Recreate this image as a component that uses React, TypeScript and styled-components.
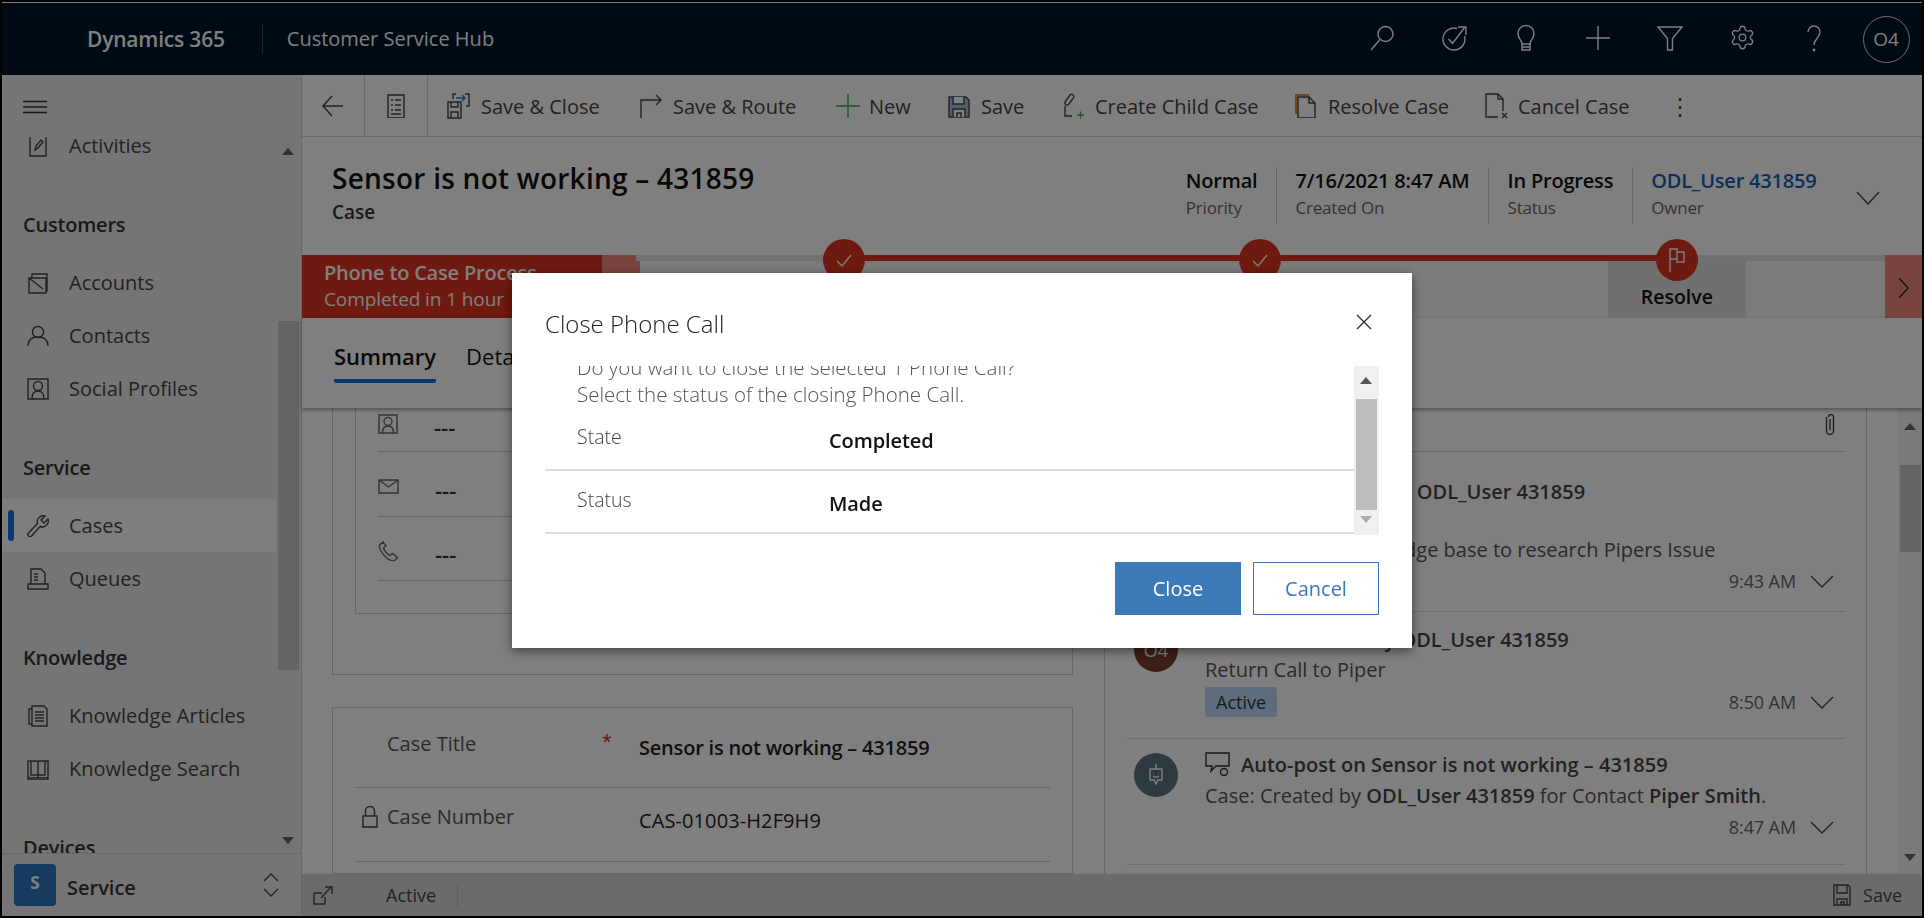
import React from "react";
import styled, { createGlobalStyle } from "styled-components";
import { Settings } from "lucide-react";

const GlobalStyle = createGlobalStyle`
  html, body { margin: 0; padding: 0; background: #000; overflow: hidden; }
  * { box-sizing: border-box; }
  body { font-family: "Open Sans", "Noto Sans", sans-serif; color: #333; }
`;

const Glyph = ({ size = 24, h, children, color }: { size?: number; h?: number; children: React.ReactNode; color?: string }) => (
  <svg
    width={size}
    height={h ?? size}
    viewBox={`0 0 ${size} ${h ?? size}`}
    fill="none"
    stroke={color ?? "currentColor"}
    strokeWidth="1.4"
    style={{ flex: "none", display: "block" }}
  >
    {children}
  </svg>
);

export default function App() {
  return (
    <>
      <GlobalStyle />
      <Frame>
        <TopBar>
          <Brand>Dynamics 365</Brand>
          <HubName>Customer Service Hub</HubName>
          <TopIcons>
            <TopIcon>
              <Glyph size={28}>
                <circle cx="17.5" cy="10" r="7.5" />
                <path d="M12 15.5 3 26" />
              </Glyph>
            </TopIcon>
            <TopIcon>
              <Glyph size={28}>
                <path d="M17 4.500A11 11 0 1 0 24.500 12" />
                <path d="M8.500 15l4 4.500L25 3M18 3h8v8" />
              </Glyph>
            </TopIcon>
            <TopIcon>
              <Glyph size={28}>
                <path d="M10 20c0-4-4-5-4-10.500a8 8 0 0 1 16 0C22 15 18 16 18 20z" />
                <path d="M10 20v6h8v-6M10 23h8" />
              </Glyph>
            </TopIcon>
            <TopIcon>
              <Glyph size={28}>
                <path d="M2 14h24M14 2v24" />
              </Glyph>
            </TopIcon>
            <TopIcon>
              <Glyph size={28}>
                <path d="M2 3h24l-9.500 11.500V26h-5V14.500z" />
              </Glyph>
            </TopIcon>
            <TopIcon>
              <Settings size={27} strokeWidth={1.15} />
            </TopIcon>
            <TopIcon>
              <Glyph size={28}>
                <path d="M8 8a6 6 0 0 1 12 0c0 6-6 7-6 13" />
                <circle cx="14" cy="26" r=".7" />
              </Glyph>
            </TopIcon>
            <TopIcon>
              <UserBadge>O4</UserBadge>
            </TopIcon>
          </TopIcons>
        </TopBar>

        <Body>
          <Sidebar>
            <SideTop>
              <Glyph size={24} h={14}>
                <path d="M0 1.500h24M0 7h24M0 12.500h24" />
              </Glyph>
            </SideTop>
            <SideNav>
              <SideScroll>
                <NavRow>
                  <Glyph size={22}>
                    <path d="M3 1h16v20H3z" />
                    <path d="M8 15l1-4 5-6 2 2-5 6z" />
                  </Glyph>
                  Activities
                </NavRow>
                <NavHead>Customers</NavHead>
                <NavRow>
                  <Glyph size={22}>
                    <path d="M2 6h17v15H2zM2 6l14 11M5 6V2h15v17h-1" />
                  </Glyph>
                  Accounts
                </NavRow>
                <NavRow>
                  <Glyph size={22}>
                    <circle cx="11" cy="7" r="5.500" />
                    <path d="M1 21c0-6 4-9 10-9s10 3 10 9" />
                  </Glyph>
                  Contacts
                </NavRow>
                <NavRow>
                  <Glyph size={22}>
                    <path d="M1 1h20v20H1z" />
                    <circle cx="11" cy="8" r="4.500" />
                    <path d="M5 21c0-6 2-8 6-8s6 2 6 8" />
                  </Glyph>
                  Social Profiles
                </NavRow>
                <NavHead>Service</NavHead>
                <NavRow $active>
                  <NavMarker />
                  <Glyph size={22}>
                    <path d="M21 4l-4 4-3-3 4-4a6 6 0 0 0-7.500 7.500L1.500 18a2 2 0 0 0 3 3L13 11.500A6 6 0 0 0 21 4z" />
                  </Glyph>
                  Cases
                </NavRow>
                <NavRow>
                  <Glyph size={22}>
                    <path d="M4 16V1h10l4 4v11M1 16h20v5H1z" />
                    <path d="M7 6h4M7 9h4M7 12h4" />
                  </Glyph>
                  Queues
                </NavRow>
                <NavHead>Knowledge</NavHead>
                <NavRow>
                  <Glyph size={22}>
                    <path d="M5 4V1h12l3 3v17H5zM5 4H2v15h3" />
                    <path d="M8 7h9M8 10h9M8 13h9M8 16h9" />
                  </Glyph>
                  Knowledge Articles
                </NavRow>
                <NavRow>
                  <Glyph size={22}>
                    <path d="M1 3h9l1 1 1-1h9v17H1zM11 4v16M1 20v2h20v-2M4 3v14h7M18 3v14h-7" />
                  </Glyph>
                  Knowledge Search
                </NavRow>
                <NavHead>Devices</NavHead>
              </SideScroll>
              <SideThumb />
              <ArrowUp $x={280} $y={11} />
              <ArrowDown $x={280} $y={700} />
            </SideNav>
            <AreaSwitch>
              <AreaTile>S</AreaTile>
              <AreaName>Service</AreaName>
              <Glyph size={16} h={26}>
                <path d="M1 9l7-7 7 7M1 17l7 7 7-7" />
              </Glyph>
            </AreaSwitch>
          </Sidebar>

          <Main>
            <Toolbar>
              <ToolSquare>
                <Glyph size={24}>
                  <path d="M22 12H2M11 2 2 12l9 10" />
                </Glyph>
              </ToolSquare>
              <ToolSquare>
                <Glyph size={24}>
                  <path d="M4 1h16v23H4z" />
                  <path d="M7 6h2M11 6h6M7 11h2M11 11h6M7 16h2M11 16h6M7 20h10" />
                </Glyph>
              </ToolSquare>
              <ToolButton $w={211} $lead={18} $gap={9}>
                <Glyph size={26}>
                  <path d="M2 9h13v16H2z" />
                  <path d="M5 9v5h7V9M5 25v-6h7v6" />
                  <path d="M7 6V1h3M19 1h4v12h-3" />
                  <path d="M10 5h9M16 2l3 3-3 3" stroke="#2b78be" />
                </Glyph>
                Save &amp; Close
              </ToolButton>
              <ToolButton $w={196} $gap={8}>
                <Glyph size={26}>
                  <path d="M2 25V7h20M17 2l5 5-5 5" />
                </Glyph>
                Save &amp; Route
              </ToolButton>
              <ToolButton $w={112} $gap={8}>
                <Glyph size={26} color="#3aa757">
                  <path d="M1 13h24M13 1v24" />
                </Glyph>
                New
              </ToolButton>
              <ToolButton $w={112} $gap={10}>
                <Glyph size={24}>
                  <path d="M2 3h17l3 3v17H2z" fill="#9fbcd8" />
                  <path d="M6 3v7h11V3" fill="#fff" />
                  <path d="M6 23v-8h12v8M10 23v-4h4v4" fill="#fff" />
                </Glyph>
                Save
              </ToolButton>
              <ToolButton $w={235} $gap={10}>
                <Glyph size={26}>
                  <path d="M6 9l5-7a2.200 2.200 0 0 1 3.500 2.600L9.500 11.500a2.200 2.200 0 0 1-3.500-2.500z" />
                  <path d="M6 13v10h7" />
                  <path d="M18 22h7M21.500 18.500v7" stroke="#3aa757" />
                </Glyph>
                Create Child Case
              </ToolButton>
              <ToolButton $w={190} $gap={10}>
                <Glyph size={24}>
                  <path d="M2 20V1h13" stroke="#e98a2b" strokeWidth="2" />
                  <path d="M4 3h11l6 6v15H4zM15 3v6h6" fill="#fff" />
                </Glyph>
                Resolve Case
              </ToolButton>
              <ToolButton $w={184} $gap={8}>
                <Glyph size={26}>
                  <path d="M14 24H2V1h12l5 5v12M14 1v5h5" />
                  <path d="M18 20l5 5M23 20l-5 5" />
                </Glyph>
                Cancel Case
              </ToolButton>
              <DotsBtn>⋮</DotsBtn>
            </Toolbar>

            <CaseHeader>
              <div>
                <CaseTitle>Sensor is not working – 431859</CaseTitle>
                <CaseKind>Case</CaseKind>
              </div>
              <HeaderFields>
                <HeadField>
                  <HeadValue>Normal</HeadValue>
                  <HeadLabel>Priority</HeadLabel>
                </HeadField>
                <HeadField $line>
                  <HeadValue>7/16/2021 8:47 AM</HeadValue>
                  <HeadLabel>Created On</HeadLabel>
                </HeadField>
                <HeadField $line>
                  <HeadValue>In Progress</HeadValue>
                  <HeadLabel>Status</HeadLabel>
                </HeadField>
                <HeadField $line>
                  <HeadValue $link>ODL_User 431859</HeadValue>
                  <HeadLabel>Owner</HeadLabel>
                </HeadField>
                <HeadChevron>
                  <Glyph size={24} h={14}>
                    <path d="M1 1l11 12L23 1" />
                  </Glyph>
                </HeadChevron>
              </HeaderFields>
            </CaseHeader>

            <ProcessBar>
              <ProcessCard>
                <ProcessName>Phone to Case Process</ProcessName>
                <ProcessTime>Completed in 1 hour</ProcessTime>
              </ProcessCard>
              <ProcessBack />
              <Stages>
                <Stage $from="50%" $to="0">
                  <StageDot>
                    <Glyph size={18}>
                      <path d="M2 10l5 5L16 4" />
                    </Glyph>
                  </StageDot>
                </Stage>
                <Stage $from="0" $to="0">
                  <StageDot>
                    <Glyph size={18}>
                      <path d="M2 10l5 5L16 4" />
                    </Glyph>
                  </StageDot>
                </Stage>
                <Stage $from="0" $to="50%">
                  <StageDot>
                    <Glyph size={18} h={26}>
                      <path d="M2 25V2h7v3h7v10H9v-3H2M9 5v7" />
                    </Glyph>
                  </StageDot>
                  <StageLabel>Resolve</StageLabel>
                </Stage>
              </Stages>
              <ProcessNext>
                <Glyph size={12} h={22}>
                  <path d="M1 1l9 10-9 10" />
                </Glyph>
              </ProcessNext>
            </ProcessBar>

            <Tabs>
              <Tab $on>Summary</Tab>
              <Tab>Details</Tab>
            </Tabs>

            <Content>
              <LeftCol>
                <Card $tall>
                  <InnerBox>
                    <ContactRow>
                      <Glyph size={20}>
                        <path d="M1 1h18v18H1z" />
                        <circle cx="10" cy="7.500" r="4" />
                        <path d="M4.500 19c0-5 2-7 5.500-7s5.500 2 5.500 7" />
                      </Glyph>
                      <Dashes>---</Dashes>
                    </ContactRow>
                    <ContactRow>
                      <Glyph size={21} h={15}>
                        <path d="M1 1h19v13H1zM1 1l9.500 7L20 1" />
                      </Glyph>
                      <Dashes>---</Dashes>
                    </ContactRow>
                    <ContactRow>
                      <Glyph size={21}>
                        <path d="M5 1 1.500 4c-1 5 8 17 15 15.500l3-3-5-4-2.500 2C9 13 6 9 5.500 7L8 5z" />
                      </Glyph>
                      <Dashes>---</Dashes>
                    </ContactRow>
                  </InnerBox>
                </Card>
                <Card>
                  <FieldRow $h={80} $pt={18}>
                    <FieldName>
                      Case Title<Required>*</Required>
                    </FieldName>
                    <FieldValue $strong>Sensor is not working – 431859</FieldValue>
                  </FieldRow>
                  <FieldRow $h={74} $pt={11}>
                    <LockSlot>
                      <Glyph size={16} h={22}>
                        <path d="M1 10h14v11H1zM3.500 10V5a4.500 4.500 0 0 1 9 0v5" />
                      </Glyph>
                    </LockSlot>
                    <FieldName>Case Number</FieldName>
                    <FieldValue>CAS-01003-H2F9H9</FieldValue>
                  </FieldRow>
                </Card>
              </LeftCol>

              <Timeline>
                <ClipRow>
                  <Glyph size={14} h={22}>
                    <path d="M7 5v11M3.500 3v14a3.500 3.500 0 0 0 7 0V3a2.500 2.500 0 0 0-5 0" />
                  </Glyph>
                </ClipRow>
                <Post $h={160}>
                  <PostBody>
                    <PostTitle $mt={27}>Task was modified by ODL_User 431859</PostTitle>
                    <PostText $mt={32}>Searching the knowledge base to research Pipers Issue</PostText>
                    <PostFoot>
                      <PostTime>9:43 AM</PostTime>
                      <PostChevron />
                    </PostFoot>
                  </PostBody>
                </Post>
                <Post $h={127}>
                  <Avatar $bg="#7d3f2c">O4</Avatar>
                  <PostBody>
                    <PostTitle $mt={15}>Phone Call made by ODL_User 431859</PostTitle>
                    <PostText $mt={4}>Return Call to Piper</PostText>
                    <PostFoot $row>
                      <Tag>Active</Tag>
                      <PostTime>8:50 AM</PostTime>
                      <PostChevron />
                    </PostFoot>
                  </PostBody>
                </Post>
                <Post $h={126}>
                  <Avatar $bg="#5d7481" $top>
                    <Glyph size={24} color="#fff">
                      <path d="M12 1v5M6 6h12v11h-4l-2 4-2-4H6z" />
                      <path d="M9 10h.5M14.500 10h.5M9 13c2 1.500 4 1.500 6 0" />
                    </Glyph>
                  </Avatar>
                  <PostBody>
                    <AutoTitle>
                      <Glyph size={26} h={26}>
                        <path d="M1 1h23v13H11l-5 5 1-5H1z" />
                        <circle cx="19" cy="20" r="3.500" fill="#fff" />
                      </Glyph>
                      <PostTitle $mt={5}>Auto-post on Sensor is not working – 431859</PostTitle>
                    </AutoTitle>
                    <PostText $mt={0}>
                      Case: Created by <b>ODL_User 431859</b> for Contact <b>Piper Smith</b>.
                    </PostText>
                    <PostFoot>
                      <PostTime>8:47 AM</PostTime>
                      <PostChevron />
                    </PostFoot>
                  </PostBody>
                </Post>
              </Timeline>

              <MainScroll>
                <ArrowUp $x={6} $y={15} />
                <MainThumb />
                <ArrowDown $x={6} $y={446} />
              </MainScroll>
            </Content>

            <StatusBar>
              <Glyph size={20}>
                <path d="M1 8v11h11M1 8h8M12 19v-7M8 13 18 2M12 2h7v7" />
              </Glyph>
              <StatusText>Active</StatusText>
              <StatusSave>
                <Glyph size={22}>
                  <path d="M3 1h14l2 2v18H3z" />
                  <path d="M6 1v8h10V1M6 21v-6h10v6M10 21v-3h3v3" />
                </Glyph>
                Save
              </StatusSave>
            </StatusBar>
          </Main>
        </Body>
      </Frame>

      <Overlay>
        <Dialog>
          <DialogHead>
            <DialogTitle>Close Phone Call</DialogTitle>
            <DialogClose>
              <Glyph size={16}>
                <path d="M1 1l14 14M15 1 1 15" />
              </Glyph>
            </DialogClose>
          </DialogHead>
          <DialogScroll>
            <DialogBody>
              <DialogNote>Do you want to close the selected 1 Phone Call?</DialogNote>
              <DialogNote>Select the status of the closing Phone Call.</DialogNote>
              <DialogRow>
                <DialogLabel>State</DialogLabel>
                <DialogValue>Completed</DialogValue>
              </DialogRow>
              <DialogRow>
                <DialogLabel>Status</DialogLabel>
                <DialogValue>Made</DialogValue>
              </DialogRow>
            </DialogBody>
            <DialogBar>
              <ArrowUp $x={6} $y={11} $tone="#555" />
              <DialogThumb />
              <ArrowDown $x={6} $y={150} $tone="#aaa" />
            </DialogBar>
          </DialogScroll>
          <DialogActions>
            <DialogBtn $primary>Close</DialogBtn>
            <DialogBtn>Cancel</DialogBtn>
          </DialogActions>
        </Dialog>
      </Overlay>
    </>
  );
}

const Frame = styled.div`
  width: 1924px;
  height: 918px;
  display: flex;
  flex-direction: column;
  border: 2px solid #000;
  background: #fff;
  overflow: hidden;
`;

const TopBar = styled.header`
  height: 73px;
  flex: none;
  display: flex;
  align-items: center;
  background: #001429;
  border-top: 1px solid #fff;
  color: #fff;
`;

const Brand = styled.div`
  margin-left: 85px;
  padding-right: 37px;
  font-size: 21px;
  font-weight: 600;
  line-height: 30px;
  letter-spacing: -0.2px;
`;

const HubName = styled.div`
  padding-left: 24px;
  border-left: 1px solid #3a4654;
  font-size: 20px;
  line-height: 30px;
`;

const TopIcons = styled.div`
  margin-left: auto;
  display: flex;
  height: 100%;
`;

const TopIcon = styled.div`
  width: 72px;
  display: flex;
  align-items: center;
  justify-content: center;
  padding-bottom: 3px;
`;

const UserBadge = styled.div`
  width: 47px;
  height: 47px;
  border: 1px solid #ddd;
  border-radius: 50%;
  display: flex;
  align-items: center;
  justify-content: center;
  font-size: 19px;
  margin-top: 3px;
`;

const Body = styled.div`
  flex: 1;
  display: flex;
  min-height: 0;
`;

const Sidebar = styled.aside`
  width: 300px;
  flex: none;
  display: flex;
  flex-direction: column;
  background: #eaeaea;
  border-right: 1px solid #d0d0d0;
`;

const SideTop = styled.div`
  height: 62px;
  flex: none;
  padding: 25px 0 0 21px;
`;

const SideNav = styled.nav`
  position: relative;
  flex: 1;
  min-height: 0;
  overflow: hidden;
`;

const SideScroll = styled.div`
  width: 274px;
  margin-top: -18px;
`;

const NavRow = styled.div<{ $active?: boolean }>`
  position: relative;
  height: 53px;
  display: flex;
  align-items: center;
  gap: 20px;
  padding-left: 25px;
  font-size: 20px;
  color: #444;
  background: ${(p) => (p.$active ? "#fdfdfd" : "transparent")};
`;

const NavMarker = styled.span`
  position: absolute;
  left: 6px;
  top: 11px;
  width: 6px;
  height: 31px;
  border-radius: 3px;
  background: #1070e8;
`;

const NavHead = styled.div`
  height: 84px;
  display: flex;
  align-items: flex-end;
  padding: 0 0 19px 21px;
  font-size: 20px;
  line-height: 24px;
  font-weight: 600;
  color: #333;
  letter-spacing: -0.2px;
`;

const SideThumb = styled.div`
  position: absolute;
  left: 276px;
  top: 184px;
  width: 21px;
  height: 349px;
  background: #c8c8c8;
`;

const ArrowUp = styled.i<{ $x: number; $y: number; $tone?: string }>`
  position: absolute;
  left: ${(p) => p.$x}px;
  top: ${(p) => p.$y}px;
  border: 6px solid transparent;
  border-top: 0;
  border-bottom: 7px solid ${(p) => p.$tone ?? "#666"};
`;

const ArrowDown = styled.i<{ $x: number; $y: number; $tone?: string }>`
  position: absolute;
  left: ${(p) => p.$x}px;
  top: ${(p) => p.$y}px;
  border: 6px solid transparent;
  border-bottom: 0;
  border-top: 7px solid ${(p) => p.$tone ?? "#666"};
`;

const AreaSwitch = styled.div`
  height: 63px;
  flex: none;
  display: flex;
  align-items: center;
  padding: 0 22px 0 12px;
  border-top: 1px solid #d0d0d0;
  background: #eaeaea;
  color: #444;
`;

const AreaTile = styled.div`
  width: 42px;
  height: 42px;
  border-radius: 4px;
  background: #2b78be;
  color: #fff;
  display: flex;
  align-items: center;
  justify-content: center;
  font-size: 17px;
  font-weight: 700;
  padding-bottom: 6px;
`;

const AreaName = styled.div`
  flex: 1;
  margin-left: 11px;
  padding-top: 4px;
  font-size: 20px;
  font-weight: 600;
  color: #333;
`;

const Main = styled.main`
  flex: 1;
  min-width: 0;
  display: flex;
  flex-direction: column;
`;

const Toolbar = styled.div`
  height: 62px;
  flex: none;
  display: flex;
  align-items: stretch;
  border-bottom: 1px solid #d0d0d0;
`;

const ToolSquare = styled.div`
  width: 63px;
  display: flex;
  align-items: center;
  justify-content: center;
  border-right: 1px solid #d0d0d0;
  color: #444;
`;

const ToolButton = styled.div<{ $w: number; $gap: number; $lead?: number }>`
  width: ${(p) => p.$w}px;
  flex: none;
  display: flex;
  align-items: center;
  gap: ${(p) => p.$gap}px;
  padding-left: ${(p) => p.$lead ?? 0}px;
  padding-top: 1px;
  font-size: 20px;
  color: #444;
`;

const DotsBtn = styled.div`
  display: flex;
  align-items: center;
  font-size: 24px;
  color: #444;
`;

const CaseHeader = styled.div`
  height: 118px;
  flex: none;
  display: flex;
  justify-content: space-between;
  padding: 20px 0 0 30px;
`;

const CaseTitle = styled.div`
  font-size: 28px;
  line-height: 42px;
  font-weight: 600;
  color: #111;
  letter-spacing: 0.25px;
`;

const CaseKind = styled.div`
  font-size: 19px;
  line-height: 26px;
  font-weight: 600;
  color: #333;
`;

const HeaderFields = styled.div`
  display: flex;
  align-items: flex-start;
  padding-top: 10px;
`;

const HeadField = styled.div<{ $line?: boolean }>`
  height: 57px;
  padding: 0 18.500px;
  border-left: ${(p) => (p.$line ? "1px solid #ccc" : "0")};
`;

const HeadValue = styled.div<{ $link?: boolean }>`
  font-size: 20px;
  line-height: 28px;
  font-weight: 600;
  color: ${(p) => (p.$link ? "#1160b7" : "#111")};
  letter-spacing: -0.2px;
`;

const HeadLabel = styled.div`
  font-size: 17px;
  line-height: 26px;
  color: #666;
  letter-spacing: -0.2px;
`;

const HeadChevron = styled.div`
  width: 87px;
  padding: 24px 0 0 21px;
  color: #444;
`;

const ProcessBar = styled.div`
  height: 63px;
  flex: none;
  display: flex;
  background: #f6f6f6;
`;

const ProcessCard = styled.div`
  width: 300px;
  flex: none;
  padding: 4px 0 0 22px;
  background: #de3420;
  color: #fff;
`;

const ProcessName = styled.div`
  font-size: 20px;
  line-height: 27px;
  font-weight: 600;
  letter-spacing: -0.2px;
`;

const ProcessTime = styled.div`
  font-size: 19px;
  line-height: 26px;
  letter-spacing: -0.1px;
`;

const ProcessBack = styled.div`
  width: 38px;
  flex: none;
  background: #f4887c;
`;

const Stages = styled.div`
  flex: 1;
  min-width: 0;
  display: flex;
  margin-left: -4px;
  border-top: 6px solid #e2e2e2;
`;

const Stage = styled.div<{ $from: string; $to: string }>`
  position: relative;
  flex: 1;
  display: flex;
  justify-content: center;
  &::before {
    content: "";
    position: absolute;
    top: -6px;
    height: 6px;
    left: ${(p) => p.$from};
    right: ${(p) => p.$to};
    background: #de3420;
  }
`;

const StageDot = styled.div`
  position: absolute;
  z-index: 1;
  top: -22px;
  left: calc(50% - 21px);
  width: 42px;
  height: 42px;
  border-radius: 50%;
  background: #de3420;
  color: #fff;
  display: flex;
  align-items: center;
  justify-content: center;
`;

const StageLabel = styled.div`
  width: 138px;
  padding-top: 23px;
  text-align: center;
  background: #e0e0e0;
  font-size: 19.500px;
  font-weight: 600;
  line-height: 26px;
  color: #111;
`;

const ProcessNext = styled.div`
  width: 37px;
  flex: none;
  display: flex;
  align-items: center;
  justify-content: center;
  padding-top: 2px;
  background: #f4887c;
  color: #222;
`;

const Tabs = styled.div`
  position: relative;
  z-index: 1;
  height: 90px;
  flex: none;
  display: flex;
  gap: 30px;
  padding: 0 0 0 32px;
  box-shadow: 0 2px 4px rgba(0, 0, 0, 0.35);
  background: #fff;
`;

const Tab = styled.div<{ $on?: boolean }>`
  height: 65px;
  padding-top: 23px;
  font-size: 22px;
  line-height: 30px;
  font-weight: ${(p) => (p.$on ? 600 : 400)};
  color: #111;
  border-bottom: ${(p) => (p.$on ? "4px solid #1070e8" : "0")};
  border-radius: 0 0 2px 2px;
`;

const Content = styled.div`
  position: relative;
  flex: 1;
  min-height: 0;
  display: flex;
  overflow: hidden;
`;

const LeftCol = styled.div`
  width: 741px;
  flex: none;
  margin-left: 30px;
  display: flex;
  flex-direction: column;
  gap: 32px;
`;

const Card = styled.section<{ $tall?: boolean }>`
  height: ${(p) => (p.$tall ? "267px" : "auto")};
  border: 1px solid #ccc;
  border-top-width: ${(p) => (p.$tall ? 0 : 1)}px;
  padding-left: 22px;
  padding-right: 22px;
  overflow: hidden;
  flex: ${(p) => (p.$tall ? "none" : 1)};
`;

const InnerBox = styled.div`
  height: 206px;
  margin-right: 20px;
  border: 1px solid #ccc;
  border-top: 0;
  padding: 0 0 0 22px;
  overflow: hidden;
`;

const ContactRow = styled.div`
  height: 64.500px;
  display: flex;
  align-items: center;
  gap: 36px;
  padding-top: 6px;
  border-bottom: 1px solid #ccc;
  color: #666;
  &:first-child {
    height: 44px;
    padding-top: 0;
    padding-bottom: 12px;
  }
`;

const Dashes = styled.span`
  width: 40px;
  padding-top: 6px;
  font-size: 22px;
  font-weight: 600;
  color: #333;
`;

const FieldRow = styled.div<{ $h: number; $pt: number }>`
  position: relative;
  height: ${(p) => p.$h}px;
  display: flex;
  padding: ${(p) => p.$pt}px 0 0 32px;
  border-bottom: 1px solid #ccc;
`;

const FieldName = styled.div`
  position: relative;
  width: 252px;
  flex: none;
  font-size: 20px;
  line-height: 36px;
  color: #555;
`;

const Required = styled.span`
  position: absolute;
  left: 215px;
  top: -3px;
  color: #d8261b;
  font-size: 18px;
`;

const LockSlot = styled.div`
  position: absolute;
  left: 7px;
  top: 18px;
  color: #444;
`;

const FieldValue = styled.div<{ $strong?: boolean }>`
  padding-top: 4px;
  font-size: 20px;
  line-height: 36px;
  font-weight: ${(p) => (p.$strong ? 600 : 500)};
  color: #222;
  letter-spacing: ${(p) => (p.$strong ? "-0.2px" : "0.1px")};
`;

const Timeline = styled.div`
  width: 763px;
  flex: none;
  margin-left: 31px;
  border-left: 1px solid #ccc;
  border-right: 1px solid #ccc;
  padding: 0 21px 0 22px;
`;

const ClipRow = styled.div`
  height: 44px;
  display: flex;
  justify-content: flex-end;
  padding: 6px 8px 0 0;
  border-bottom: 1px solid #ccc;
  color: #444;
`;

const Post = styled.article<{ $h: number }>`
  position: relative;
  height: ${(p) => p.$h}px;
  padding-left: 78px;
  display: flex;
  border-bottom: 1px solid #ddd;
`;

const PostBody = styled.div`
  flex: 1;
  min-width: 0;
`;

const PostTitle = styled.div<{ $mt: number }>`
  margin-top: ${(p) => p.$mt}px;
  font-size: 20px;
  line-height: 26px;
  font-weight: 600;
  color: #444;
  white-space: nowrap;
`;

const AutoTitle = styled.div`
  display: flex;
  gap: 10px;
  padding-top: 13px;
  height: 44px;
  ${PostTitle} {
    margin-top: 0;
  }
`;

const PostText = styled.div<{ $mt: number }>`
  margin-top: ${(p) => p.$mt}px;
  font-size: 20px;
  line-height: 26px;
  color: #555;
  white-space: nowrap;
  b {
    font-weight: 600;
    color: #444;
  }
`;

const PostFoot = styled.div<{ $row?: boolean }>`
  position: relative;
  display: flex;
  align-items: center;
  justify-content: flex-end;
  height: 30px;
  padding-right: 11px;
  margin-top: ${(p) => (p.$row ? 4 : 3)}px;
`;

const PostTime = styled.div`
  font-size: 18px;
  color: #666;
  letter-spacing: -0.1px;
`;

const PostChevron = () => (
  <ChevronBox>
    <Glyph size={24} h={13}>
      <path d="M1 1l11 11L23 1" />
    </Glyph>
  </ChevronBox>
);

const ChevronBox = styled.span`
  margin-left: 14px;
  color: #444;
`;

const Tag = styled.span`
  position: absolute;
  left: 0;
  top: 0;
  height: 30px;
  padding: 0 11px;
  display: flex;
  align-items: center;
  border-radius: 2px;
  background: #bcd9fb;
  font-size: 18px;
  color: #333;
`;

const Avatar = styled.div<{ $bg: string; $top?: boolean }>`
  position: absolute;
  left: 7px;
  top: ${(p) => (p.$top ? 14 : 16)}px;
  width: 44px;
  height: 44px;
  border-radius: 50%;
  background: ${(p) => p.$bg};
  color: #fff;
  display: flex;
  align-items: center;
  justify-content: center;
  font-size: 18px;
`;

const MainScroll = styled.div`
  position: relative;
  width: 25px;
  flex: none;
  margin-left: 31px;
  background: #f4f4f4;
`;

const MainThumb = styled.div`
  position: absolute;
  left: 2px;
  top: 57px;
  width: 21px;
  height: 87px;
  background: #c8c8c8;
`;

const StatusBar = styled.footer`
  height: 42px;
  flex: none;
  display: flex;
  align-items: center;
  padding: 0 20px 0 11px;
  background: #d6d6d6;
  color: #444;
`;

const StatusText = styled.div`
  margin-left: 53px;
  padding-right: 21px;
  border-right: 1px solid #bbb;
  font-size: 18px;
  line-height: 24px;
`;

const StatusSave = styled.div`
  margin-left: auto;
  display: flex;
  align-items: center;
  gap: 10px;
  font-size: 18px;
`;

const Overlay = styled.div`
  position: fixed;
  inset: 0;
  z-index: 10;
  display: flex;
  justify-content: center;
  align-items: flex-start;
  padding-top: 273px;
  background: rgba(0, 0, 0, 0.5);
`;

const Dialog = styled.div`
  width: 900px;
  height: 375px;
  background: #fff;
  box-shadow: 0 3px 10px rgba(0, 0, 0, 0.5);
  padding: 0 33px;
`;

const DialogHead = styled.div`
  height: 93px;
  display: flex;
  justify-content: space-between;
  padding-top: 32px;
`;

const DialogTitle = styled.div`
  font-size: 24px;
  line-height: 38px;
  font-weight: 300;
  color: #222;
`;

const DialogClose = styled.div`
  padding: 9px 7px 0 0;
  color: #333;
`;

const DialogScroll = styled.div`
  height: 169px;
  display: flex;
  overflow: hidden;
`;

const DialogBody = styled.div`
  flex: 1;
  min-width: 0;
  margin-top: -12px;
`;

const DialogNote = styled.div`
  padding-left: 32px;
  font-size: 20.5px;
  line-height: 27px;
  font-weight: 300;
  color: #555;
`;

const DialogRow = styled.div`
  height: 63px;
  display: flex;
  padding-left: 32px;
  border-bottom: 2px solid #ddd;
`;

const DialogLabel = styled.div`
  width: 252px;
  flex: none;
  padding-top: 16px;
  font-size: 19.5px;
  line-height: 26px;
  font-weight: 300;
  color: #444;
`;

const DialogValue = styled.div`
  padding-top: 20px;
  font-size: 20px;
  line-height: 26px;
  font-weight: 600;
  color: #111;
  letter-spacing: -0.1px;
`;

const DialogBar = styled.div`
  position: relative;
  width: 25px;
  flex: none;
  background: #f0f0f0;
`;

const DialogThumb = styled.div`
  position: absolute;
  left: 2px;
  top: 33px;
  width: 21px;
  height: 111px;
  background: #bdbdbd;
`;

const DialogActions = styled.div`
  display: flex;
  justify-content: flex-end;
  gap: 12px;
  padding-top: 27px;
`;

const DialogBtn = styled.div<{ $primary?: boolean }>`
  width: 126px;
  height: 53px;
  display: flex;
  align-items: center;
  justify-content: center;
  font-size: 20px;
  color: ${(p) => (p.$primary ? "#fff" : "#3b79b7")};
  background: ${(p) => (p.$primary ? "#3b79b7" : "#fff")};
  border: 1px solid #3b79b7;
`;
